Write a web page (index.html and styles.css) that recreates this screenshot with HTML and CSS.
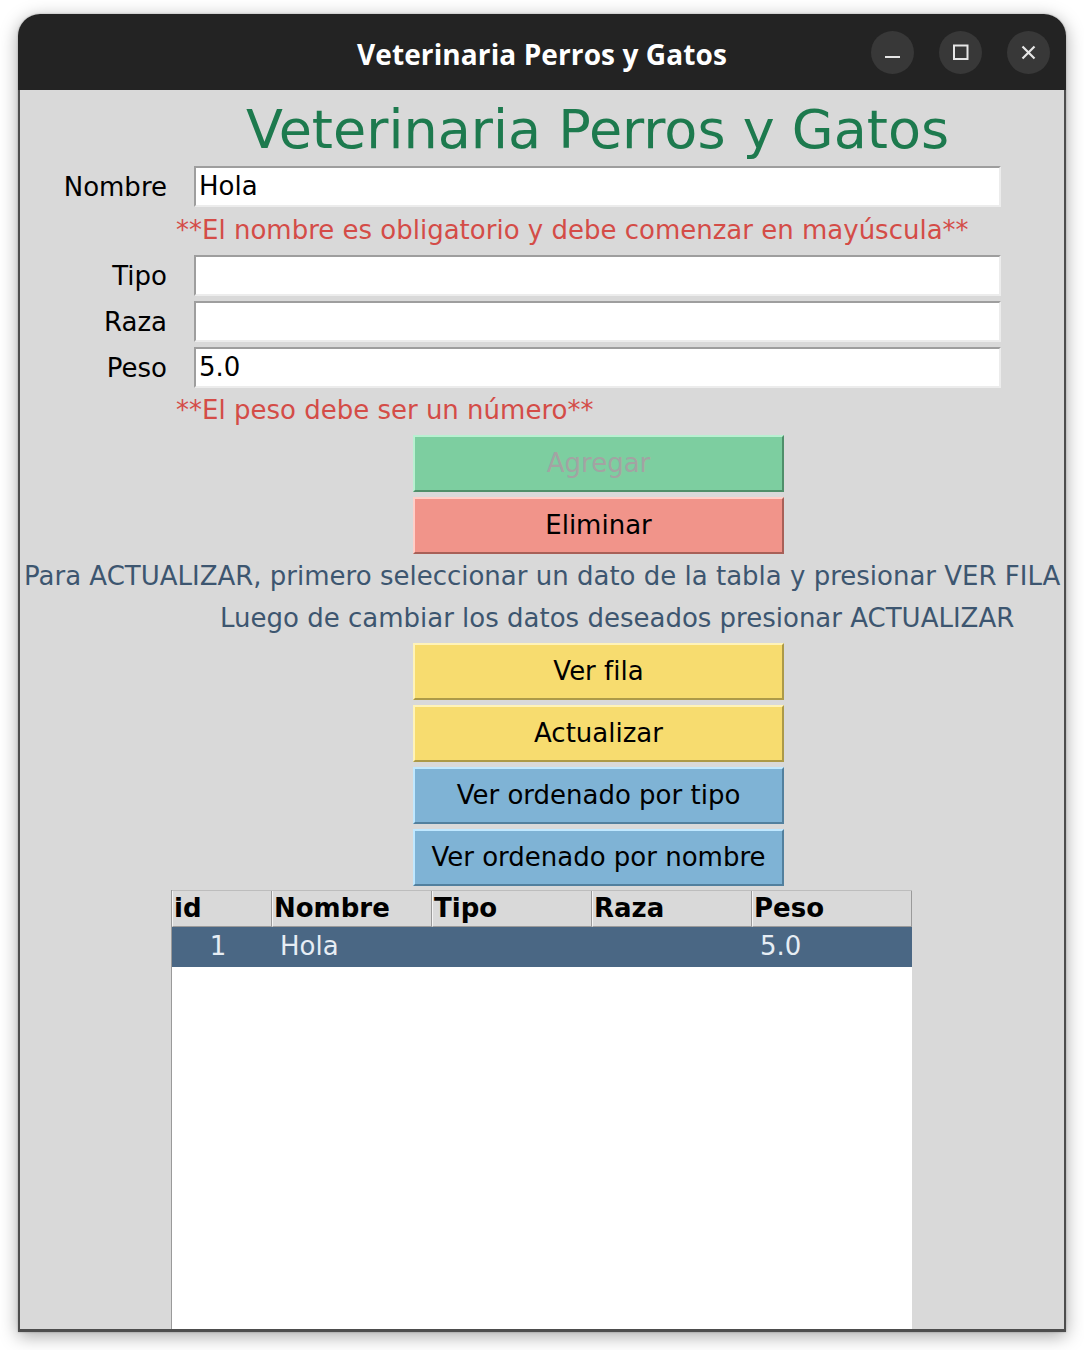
FILE: index.html
```html
<!DOCTYPE html>
<html lang="es">
<head>
<meta charset="utf-8">
<title>Veterinaria Perros y Gatos</title>
<link rel="stylesheet" href="styles.css">
</head>
<body>
<div class="window">
  <div class="titlebar">
    <div class="spacer"></div>
    <div class="title">Veterinaria Perros y Gatos</div>
    <div class="controls">
      <span class="ctl"><svg width="43" height="43" viewBox="0 0 43 43"><line x1="14" y1="26" x2="29" y2="26" stroke="#e6e6e6" stroke-width="2.2"/></svg></span>
      <span class="ctl"><svg width="43" height="43" viewBox="0 0 43 43"><rect x="15" y="14.5" width="13.5" height="13.5" fill="none" stroke="#e6e6e6" stroke-width="2"/></svg></span>
      <span class="ctl"><svg width="43" height="43" viewBox="0 0 43 43"><path d="M15.5 15.5 L27.5 27.5 M27.5 15.5 L15.5 27.5" stroke="#e6e6e6" stroke-width="2.2" fill="none"/></svg></span>
    </div>
  </div>
  <div class="content">
    <div class="form">
      <h1 class="heading">Veterinaria Perros y Gatos</h1>
      <div class="lbl">Nombre</div><div class="entry">Hola</div>
      <div class="err err-name">**El nombre es obligatorio y debe comenzar en mayúscula**</div>
      <div class="lbl spaced">Tipo</div><div class="entry spaced"></div>
      <div class="lbl spaced">Raza</div><div class="entry spaced"></div>
      <div class="lbl">Peso</div><div class="entry">5.0</div>
      <div class="err err-peso">**El peso debe ser un número**</div>
    </div>
    <div class="btns">
      <div class="btn green disabled">Agregar</div>
      <div class="btn red">Eliminar</div>
    </div>
    <div class="info">
      <div class="info-1">Para ACTUALIZAR, primero seleccionar un dato de la tabla y presionar VER FILA</div>
      <div class="info-2">Luego de cambiar los datos deseados presionar ACTUALIZAR</div>
    </div>
    <div class="btns">
      <div class="btn yellow">Ver fila</div>
      <div class="btn yellow">Actualizar</div>
      <div class="btn blue">Ver ordenado por tipo</div>
      <div class="btn blue">Ver ordenado por nombre</div>
    </div>
    <div class="table">
      <div class="thead">
        <div class="th">id</div>
        <div class="th">Nombre</div>
        <div class="th">Tipo</div>
        <div class="th">Raza</div>
        <div class="th">Peso</div>
      </div>
      <div class="tr selected">
        <div class="td center">1</div>
        <div class="td">Hola</div>
        <div class="td"></div>
        <div class="td"></div>
        <div class="td">5.0</div>
      </div>
      <div class="tbody-empty"></div>
    </div>
  </div>
</div>
</body>
</html>
```

FILE: styles.css
```css
html, body {
  margin: 0;
  padding: 0;
  background: #ffffff;
}

body {
  width: 1084px;
  height: 1350px;
  overflow: hidden;
}

.window {
  margin: 14px 0 0 18px;
  width: 1048px;
  height: 1318px;
  border-radius: 22px 22px 0 0;
  overflow: hidden;
  box-shadow: 0 4px 18px rgba(0, 0, 0, 0.35), 0 0 2px rgba(0, 0, 0, 0.3);
  display: flex;
  flex-direction: column;
}

.titlebar {
  height: 76px;
  flex: none;
  background: #232323;
  display: grid;
  grid-template-columns: 1fr auto 1fr;
  align-items: center;
}

.title {
  font-family: "Open Sans", "DejaVu Sans", sans-serif;
  font-weight: 700;
  font-size: 28px;
  color: #ffffff;
  letter-spacing: 0.1px;
  padding-top: 4px;
}

.controls {
  justify-self: end;
  display: flex;
  gap: 25px;
  padding-right: 16px;
}

.ctl {
  width: 43px;
  height: 43px;
  border-radius: 50%;
  background: #383838;
  display: block;
}

.ctl svg {
  display: block;
}

.content {
  flex: 1;
  background: #d9d9d9;
  border-left: 2px solid #4d4d4d;
  border-right: 2px solid #4d4d4d;
  border-bottom: 3px solid #4d4d4d;
  display: flex;
  flex-direction: column;
  min-height: 0;
  overflow: hidden;
  font-family: "DejaVu Sans", sans-serif;
  font-size: 26px;
  color: #000000;
}

.form {
  display: grid;
  grid-template-columns: 174px 807px;
  align-items: center;
}

.heading {
  grid-column: 2;
  margin: 9px 0 5px 0;
  font-weight: 400;
  font-size: 54px;
  line-height: 62px;
  height: 62px;
  color: #1d7a4e;
  text-align: center;
  white-space: nowrap;
}

.lbl {
  grid-column: 1;
  text-align: right;
  padding-right: 27px;
  line-height: 30px;
}

.lbl.spaced {
  margin-bottom: 5px;
}

.entry {
  grid-column: 2;
  height: 41px;
  box-sizing: border-box;
  background: #ffffff;
  border-top: 2px solid #9e9e9e;
  border-left: 2px solid #9e9e9e;
  border-bottom: 2px solid #ececec;
  border-right: 2px solid #ececec;
  padding-left: 3px;
  line-height: 37px;
  white-space: nowrap;
}

.entry.spaced {
  margin-bottom: 5px;
}

.err {
  grid-column: 1 / -1;
  padding-left: 156px;
  color: #d44c47;
  white-space: nowrap;
}

.err-name {
  height: 48px;
  line-height: 46px;
}

.err-peso {
  height: 47px;
  line-height: 44px;
}

.btns {
  display: flex;
  flex-direction: column;
  gap: 5px;
  padding-left: 393px;
}

.btn {
  width: 371px;
  height: 57px;
  box-sizing: border-box;
  text-align: center;
  line-height: 53px;
  white-space: nowrap;
  border: 2px solid;
}

.btn.green {
  background: #7dcea0;
  border-color: #b9f0d1 #4f8f6a #4f8f6a #b9f0d1;
}

.btn.disabled {
  color: #a3a3a3;
}

.btn.red {
  background: #f1948a;
  border-color: #ffcfc8 #a86058 #a86058 #ffcfc8;
}

.btn.yellow {
  background: #f7dc6f;
  border-color: #fff3b8 #ad9a48 #ad9a48 #fff3b8;
}

.btn.blue {
  background: #7fb3d5;
  border-color: #c0e8ff #52809e #52809e #c0e8ff;
}

.info {
  margin: 1px 0 4px 0;
  color: #3d5670;
  white-space: nowrap;
  line-height: 42px;
}

.info-1 {
  padding-left: 4px;
}

.info-2 {
  padding-left: 200px;
}

.table {
  margin: 4px 0 0 151px;
  width: 741px;
  flex: 1;
  box-sizing: border-box;
  background: #ffffff;
  border-left: 1px solid #9a9a9a;
  display: flex;
  flex-direction: column;
}

.thead {
  display: grid;
  grid-template-columns: 100px 160px 160px 160px 160px;
  height: 37px;
  background: #d9d9d9;
  border-top: 1px solid #bdbdbd;
  box-sizing: border-box;
}

.th {
  box-sizing: border-box;
  border-left: 1px solid #f4f4f4;
  border-right: 1px solid #9a9a9a;
  border-bottom: 1px solid #9a9a9a;
  padding-left: 1px;
  font-weight: 700;
  line-height: 34px;
  white-space: nowrap;
}

.tr {
  display: grid;
  grid-template-columns: 100px 160px 160px 160px 160px;
  height: 40px;
}

.tr.selected {
  background: #4a6784;
  color: #e6edf4;
}

.td {
  padding-left: 8px;
  line-height: 38px;
  white-space: nowrap;
}

.td.center {
  text-align: center;
  padding-left: 0;
  padding-right: 8px;
}

.tbody-empty {
  flex: 1;
}
```
